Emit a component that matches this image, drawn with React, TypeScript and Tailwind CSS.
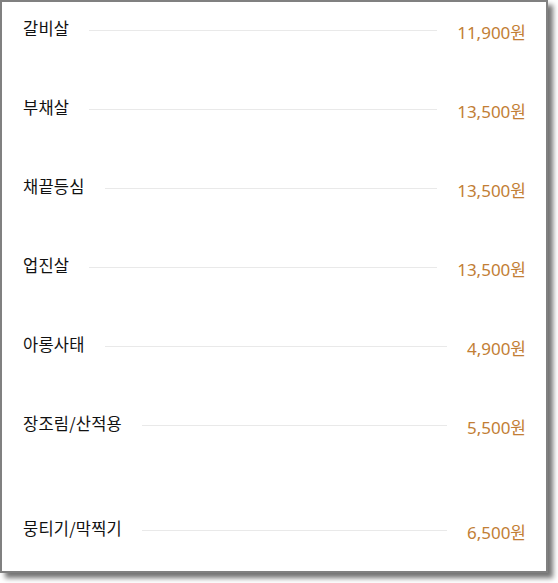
const ITEMS = [
  { name: "갈비살", price: "11,900원" },
  { name: "부채살", price: "13,500원" },
  { name: "채끝등심", price: "13,500원" },
  { name: "업진살", price: "13,500원" },
  { name: "아롱사태", price: "4,900원" },
  { name: "장조림/산적용", price: "5,500원", extra: true },
  { name: "뭉티기/막찍기", price: "6,500원" },
];

export default function App() {
  return (
    <div className="w-[558px] h-[583px] bg-white">
      <div className="w-[548px] h-[573px] bg-white border-2 border-[#808080] shadow-[5px_5px_5px_rgba(0,0,0,0.55)] pt-[18px] pl-[21px] pr-[20px]">
        {ITEMS.map((it, i) => (
          <div
            key={i}
            className={`flex items-center h-[20px] ${it.extra ? "mb-[85px]" : "mb-[59px]"}`}
          >
            <span className="text-[16.5px] text-[#111] font-['Noto_Sans_CJK_KR',sans-serif] leading-none mb-[3px] tracking-[0.2px]">
              {it.name}
            </span>
            <div className="flex-1 h-px bg-[#e9e9e9] mx-5 mt-[1px]" />
            <span className="text-[17px] text-[#c27e35] font-['Noto_Sans','Noto_Sans_CJK_KR',sans-serif] leading-none mt-[4px]">
              {it.price}
            </span>
          </div>
        ))}
      </div>
    </div>
  );
}
